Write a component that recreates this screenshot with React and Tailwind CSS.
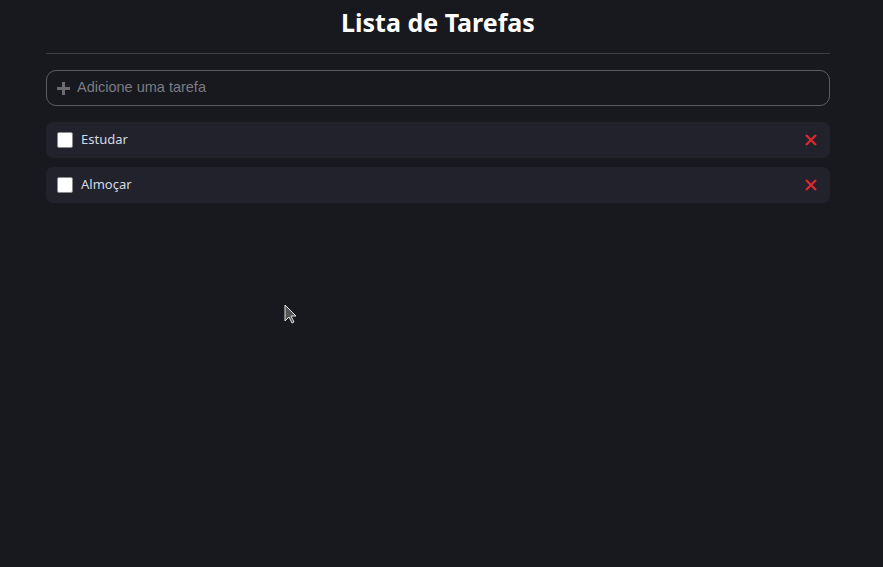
import React, { useState } from 'react';

export default function App() {
  const [tasks, setTasks] = useState([
    { id: 1, text: 'Estudar', done: false },
    { id: 2, text: 'Almoçar', done: false },
  ]);

  return (
    <div className="relative min-h-[567px] w-full bg-[#18181f] pt-[6px]" style={{ fontFamily: '"Noto Sans", sans-serif' }}>
      <div className="ml-[46px] w-[784px]">
        <h1 className="text-center text-[25px] font-bold leading-[33px] text-white">Lista de Tarefas</h1>
        <div className="mt-[14px] h-px bg-[#3d3d44]" />

        <div className="mt-[16px] flex h-[36px] items-center gap-[6px] rounded-[10px] border border-[#5c5c62] px-[9px]">
          <svg width="15" height="15" viewBox="0 0 15 15">
            <path d="M7.5 1v13M1 7.5h13" stroke="#6b6b70" strokeWidth="3" />
          </svg>
          <input
            placeholder="Adicione uma tarefa"
            className="flex-1 bg-transparent text-[14.5px] text-gray-200 placeholder-[#7c7c82] outline-none"
            style={{ fontFamily: '"Liberation Sans", Arial, sans-serif' }}
          />
        </div>

        <ul className="mt-[16px] flex flex-col gap-[9px]">
          {tasks.map(t => (
            <li key={t.id} className="flex h-[36px] items-center rounded-[7px] bg-[#22222c] pl-[11px] pr-[12px]">
              <input
                type="checkbox"
                checked={t.done}
                onChange={() => setTasks(tasks.map(x => x.id === t.id ? { ...x, done: !x.done } : x))}
                className="h-[16px] w-[16px] appearance-none rounded-[2px] border border-[#8a8a8a] bg-white"
              />
              <span className="ml-[8px] flex-1 text-[13px] text-[#d4d8e4]">{t.text}</span>
              <button onClick={() => setTasks(tasks.filter(x => x.id !== t.id))}>
                <svg width="14" height="14" viewBox="0 0 14 14">
                  <path d="M2 2l10 10M12 2L2 12" stroke="#e0282e" strokeWidth="2.2" />
                </svg>
              </button>
            </li>
          ))}
        </ul>
      </div>

      <svg className="absolute left-[284px] top-[304px]" width="14" height="22" viewBox="0 0 14 22">
        <path d="M1 1v16l4-4 3 6 2-1-3-6h5z" fill="#555" stroke="#ddd" strokeWidth="1" />
      </svg>
    </div>
  );
}
